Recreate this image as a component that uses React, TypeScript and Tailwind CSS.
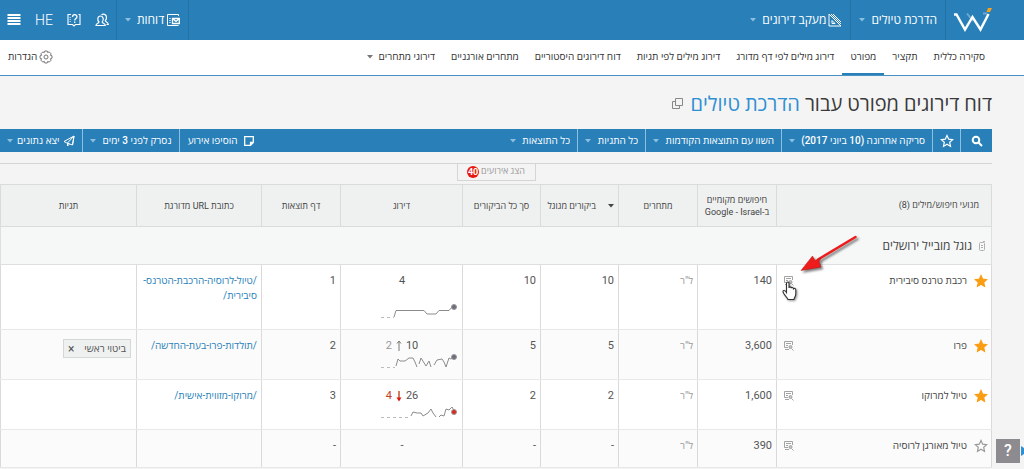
import React from 'react';
import clsx from 'clsx';

interface Spark {
  dashed: string;
  line: string;
  end: number;
  color: string;
}

interface KeywordRow {
  keyword: string;
  starred: boolean;
  searches: string;
  google: string;
  total: string;
  rank: string;
  previous?: string;
  trend?: 'up' | 'down';
  spark?: Spark;
  page: string;
  url?: string[];
  tag?: string;
  height: string;
}

const rows: KeywordRow[] = [
  {
    keyword: 'רכבת טרנס סיבירית',
    starred: true,
    searches: '140',
    google: '10',
    total: '10',
    rank: '4',
    spark: {
      dashed: 'M1 14.500H14',
      line: 'M14 14L16 7.500H44L47 11H56L59 7.500H69L72 4H75',
      end: 4,
      color: '#6b6f7b',
    },
    page: '1',
    url: ['/טיול-לרוסיה-הרכבת-הטרנס-', 'סיבירית/'],
    height: 'h-16',
  },
  {
    keyword: 'פרו',
    starred: true,
    searches: '3,600',
    google: '5',
    total: '5',
    rank: '10',
    previous: '2',
    trend: 'up',
    spark: {
      dashed: 'M1 14.500H15',
      line: 'M16 13L18 6L20 8H25L29 5H33L35 9L37 14M39 11L41 5L46 13L49 8L51 14M54 12L57 7L62 6L64 9L66 14L69 5L71 6L74 4',
      end: 4,
      color: '#6b6f7b',
    },
    page: '2',
    url: ['/תולדות-פרו-בעת-החדשה/'],
    tag: 'ביטוי ראשי',
    height: 'h-[49px]',
  },
  {
    keyword: 'טיול למרוקו',
    starred: true,
    searches: '1,600',
    google: '2',
    total: '2',
    rank: '26',
    previous: '4',
    trend: 'down',
    spark: {
      dashed: 'M1 14.500H31',
      line: 'M31 13L33 9L37 10H41L43 13L48 10L51 6L53 10L56 14M59 14L61 12L64 13L66 6L69 7L72 4L75 9',
      end: 9,
      color: '#d9281c',
    },
    page: '3',
    url: ['/מרוקו-מזווית-אישית/'],
    height: 'h-[49px]',
  },
  {
    keyword: 'טיול מאורגן לרוסיה',
    starred: false,
    searches: '390',
    google: '-',
    total: '-',
    rank: '-',
    page: '-',
    height: 'h-[37px]',
  },
];

const tabs = [
  'סקירה כללית',
  'תקציר',
  'מפורט',
  'דירוג מילים לפי דף מדורג',
  'דירוג מילים לפי תגיות',
  'דוח דירוגים היסטוריים',
  'מתחרים אורגניים',
  'דירוגי מתחרים',
];

const filters = [
  { label: 'תאריך סריקה', value: 'סריקה אחרונה (10 ביוני 2017)' },
  { label: 'השוואה', value: 'השוו עם התוצאות הקודמות' },
  { label: 'תגיות', value: 'כל התגיות' },
  { label: 'תוצאות', value: 'כל התוצאות' },
];

const Caret = ({ className }: { className?: string }) => (
  <svg viewBox="0 0 6 4" className={clsx('h-1 w-1.5 shrink-0', className)} fill="currentColor" aria-hidden="true">
    <path d="M0 0H6L3 3.500Z" />
  </svg>
);

const Logo = () => (
  <svg viewBox="0 0 40 26" className="h-[26px] w-10" fill="none" aria-label="W" role="img">
    <path d="M14 6.500L20 14M30 6.500L34 6.500" stroke="#6ba9d3" strokeWidth="2" />
    <path d="M1 7.500H3.500L12 22.500L19.500 10L27.500 22.500L35.500 7" stroke="#fff" strokeWidth="2.400" />
    <path d="M33.500 5L35 1H39L37 5Z" fill="#f7a11b" />
  </svg>
);

const RulerIcon = () => (
  <svg viewBox="0 0 14 14" className="size-3.5" fill="none" stroke="currentColor" aria-hidden="true">
    <path d="M1 1V13H13ZM4 7.500V10.500H7ZM3 1L13 11M5 1L13 9M8 3L6.500 4.500M10 5L8.500 6.500M12 7L10.500 8.500" />
  </svg>
);

const ReportIcon = () => (
  <svg viewBox="0 0 14 14" className="size-3.5" fill="none" stroke="currentColor" aria-hidden="true">
    <path d="M12.500 3V1.500H1.500V12.500H12.500" />
    <path d="M3 5.500H5M3 7.500H5M3 9.500H5" stroke="#a9cfe9" />
    <path d="M6.500 5.500H13.300V10.500H6.500ZM6.500 5.500L10 8.500L13.300 5.500" strokeWidth="1.300" />
  </svg>
);

const UsersIcon = () => (
  <svg viewBox="0 0 14 14" className="size-3.5" fill="none" stroke="currentColor" strokeWidth="1.200" aria-hidden="true">
    <path d="M1 12.500C1 10 4 10.500 4 9C2 7 2.500 3 5.500 3S9 7 7.200 9C7.200 10.500 10.300 10 10.300 12.500Z" />
    <path d="M6.500 2C8 .5 11.500 1 11.500 4.500C11.500 6 10.800 7 10.300 7.500C10.300 9 13.300 9 13.300 11.500H11.500" />
  </svg>
);

const GuideIcon = () => (
  <svg viewBox="0 0 14 14" className="size-3.5" fill="none" stroke="currentColor" strokeWidth="1.100" aria-hidden="true">
    <path d="M4 1.500H1V11.500H5.500L7 13L8.500 11.500H13V1.500H11.500" />
    <path d="M2.500 4.500H4M2.500 6.500H4M2.500 8.500H4" stroke="#a9cfe9" />
    <path d="M5.500 4C5.500 1 10 1 10 3.700C10 5.500 7.700 5.500 7.700 7.500M7.700 8.500V10" strokeWidth="1.300" />
  </svg>
);

const GearIcon = () => (
  <svg viewBox="0 0 14 14" className="size-3.5" fill="none" stroke="#777" aria-hidden="true">
    <path d="M5.800 1H8.200L8.700 2.600L10.200 1.900L12.100 3.800L11.400 5.300L13 5.800V8.200L11.400 8.700L12.100 10.200L10.200 12.100L8.700 11.400L8.200 13H5.800L5.300 11.400L3.800 12.100L1.900 10.200L2.600 8.700L1 8.200V5.800L2.600 5.300L1.900 3.800L3.800 1.900L5.300 2.600Z" />
    <circle cx="7" cy="7" r="2" />
  </svg>
);

const StarIcon = ({ filled, className }: { filled: boolean; className?: string }) => (
  <svg
    viewBox="0 0 14 14"
    className={clsx('size-3.5 shrink-0', className)}
    fill={filled ? 'currentColor' : 'none'}
    stroke="currentColor"
    strokeWidth="1.200"
    aria-hidden="true"
  >
    <path d="M7 1.500L8.700 5.200L12.700 5.600L9.700 8.300L10.500 12.400L7 10.300L3.500 12.400L4.300 8.300L1.300 5.600L5.300 5.200Z" />
  </svg>
);

const SerpIcon = () => (
  <svg viewBox="0 0 11 11" className="size-[11px]" fill="none" stroke="#a3a3a3" aria-hidden="true">
    <path d="M5 7.500H1.500V1.500H9.500V5M3 3.500H8M3 5.500H5" />
    <circle cx="7.500" cy="7" r="1.500" fill="#c4c4c4" />
    <path d="M8.500 8.500L10.500 10.500M2 9.500H6" />
  </svg>
);

const TrendArrow = ({ trend }: { trend: 'up' | 'down' }) => (
  <svg viewBox="0 0 6 12" className="h-3 w-1.5" fill="none" aria-label={trend} role="img">
    {trend === 'up' ? (
      <path d="M3 11V1.500M1 3.500L3 1L5 3.500" stroke="#777" />
    ) : (
      <>
        <path d="M3 1V9" stroke="#c8502a" strokeWidth="1.500" />
        <path d="M.5 7.500H5.500L3 11.500Z" fill="#e0150c" />
      </>
    )}
  </svg>
);

const Sparkline = ({ spark }: { spark: Spark }) => (
  <svg viewBox="0 0 78 18" className="h-[18px] w-[78px]" fill="none" stroke="#8c8c8c" aria-hidden="true">
    <path d={spark.dashed} stroke="#bbb" strokeDasharray="3 3" />
    <path d={spark.line} />
    <circle cx="74" cy={spark.end} r="2.500" fill={spark.color} stroke="#999" />
  </svg>
);

// red arrow and hand that point at the results button of the first keyword
const Pointer = () => (
  <svg viewBox="0 0 84 70" className="pointer-events-none absolute top-[-32px] left-0 z-10 h-[70px] w-[84px]" aria-hidden="true">
    <g style={{ filter: 'drop-shadow(2px 2px 1px rgba(0,0,0,.5))' }}>
      <path d="M78.500 4L41 26.500" stroke="#ee1c1c" strokeWidth="2.500" strokeLinecap="round" />
      <path d="M24 37.500L35.500 23L38 27.500L44 25L42 29L44 34Z" fill="#ee1c1c" stroke="#b11" strokeWidth=".5" />
    </g>
    <path
      d="M9.500 50.500C9.500 48.500 12 48.500 12 50.500V55C12 53.500 14 53.500 14.200 55.200C14.500 54 16.200 54.200 16.400 55.800C17 55 18.800 55.500 18.800 57V61C18.800 64 17 64.500 17 66.500H11C10.500 64.500 6 61 6 58.500C6 57 8 57 9.500 59.500Z"
      fill="#fff"
      stroke="#333"
      strokeWidth="1.100"
      style={{ filter: 'drop-shadow(1px 1px 1px rgba(0,0,0,.4))' }}
    />
  </svg>
);

const TopBar = () => (
  <header className="flex h-10 items-stretch bg-[#2980b9] text-xs text-white">
    <a href="#home" className="flex w-[79px] items-center border-e border-[#2472a5] ps-[31px]">
      <Logo />
    </a>
    <button type="button" className="flex items-center gap-1.5 border-e border-[#2472a5] px-2">
      הדרכת טיולים
      <Caret className="text-[#8dbfe0]" />
    </button>
    <button type="button" className="flex items-center gap-0.5 px-2">
      <RulerIcon />
      מעקב דירוגים
      <Caret className="ms-1 text-[#8dbfe0]" />
    </button>
    <div className="flex-1" />
    <button type="button" className="flex items-center gap-0.5 border-x border-[#2472a5] px-2">
      <ReportIcon />
      דוחות
      <Caret className="ms-1 text-[#8dbfe0]" />
    </button>
    <div className="flex items-center gap-3.5 ps-[7px] pe-[7px]">
      <button type="button" aria-label="משתמשים">
        <UsersIcon />
      </button>
      <button type="button" aria-label="מדריך">
        <GuideIcon />
      </button>
      <button type="button" className="text-sm font-light">
        HE
      </button>
      <button type="button" aria-label="תפריט">
        <svg viewBox="0 0 14 14" className="size-3.5" stroke="currentColor" strokeWidth="2" aria-hidden="true">
          <path d="M.5 2H13.500M.5 5H13.500M.5 8H13.500M.5 11H13.500" />
        </svg>
      </button>
    </div>
  </header>
);

const Tabs = () => (
  <nav className="flex h-9 items-stretch border-b border-[#4a90c4] bg-white ps-[31px] pe-2 text-[10px] text-[#333]">
    {tabs.map((tab, i) => (
      <a
        key={tab}
        href="#tab"
        className={clsx('flex items-center gap-1.5 border-b-2 px-2 whitespace-nowrap', i === 2 ? 'border-[#2980b9]' : 'border-transparent')}
      >
        {tab}
        {i === tabs.length - 1 && <Caret className="text-[#777]" />}
      </a>
    ))}
    <button type="button" className="ms-auto flex items-center gap-0.5 pb-0.5 whitespace-nowrap">
      <GearIcon />
      הגדרות
    </button>
  </nav>
);

const Toolbar = () => (
  <div className="flex h-[23px] items-stretch bg-[#2980b9] text-[10px] text-white">
    <button type="button" aria-label="חיפוש" className="flex w-8 items-center justify-center border-e border-[#8dbfe0]">
      <svg viewBox="0 0 12 12" className="size-3" fill="none" stroke="currentColor" strokeWidth="2" aria-hidden="true">
        <circle cx="5" cy="5" r="3.300" />
        <path d="M7.500 7.500L11 11" />
      </svg>
    </button>
    <button type="button" aria-label="מועדפים" className="flex w-7 items-center justify-center border-e border-[#8dbfe0]">
      <StarIcon filled={false} />
    </button>
    {filters.map((filter, i) => (
      <label
        key={filter.label}
        className={clsx('flex items-center gap-1.5 px-[7px]', i < filters.length - 1 && 'border-e border-[#8dbfe0]')}
      >
        <select aria-label={filter.label} className="appearance-none bg-transparent font-medium">
          <option>{filter.value}</option>
        </select>
        <Caret className="text-[#8dbfe0]" />
      </label>
    ))}
    <div className="flex-1" />
    <button type="button" className="flex items-center gap-1.5 px-2 font-medium whitespace-nowrap">
      <svg viewBox="0 0 10 10" className="size-2.5" fill="none" stroke="currentColor" strokeWidth="1.300" aria-hidden="true">
        <path d="M.7 .7H9.300V6.500L6.500 9.300H.7ZM9 6.500H6.500V9" />
      </svg>
      הוסיפו אירוע
    </button>
    <button type="button" className="flex items-center gap-1.5 border-x border-[#8dbfe0] px-[7px] font-medium whitespace-nowrap">
      נסרק לפני 3 ימים
      <Caret className="text-[#8dbfe0]" />
    </button>
    <button type="button" className="flex items-center gap-1 px-[7px] font-medium whitespace-nowrap">
      <svg viewBox="0 0 12 12" className="size-3" fill="none" stroke="currentColor" strokeLinejoin="round" aria-hidden="true">
        <path d="M11 1L1 6.500L3.500 7.800L9.500 10ZM11 1L4.500 8V11L6.500 9M11 1L9.500 10" />
      </svg>
      יצא נתונים
      <Caret className="text-[#8dbfe0]" />
    </button>
  </div>
);

const headCell = 'border border-[#dadcdc] px-1 text-center font-normal leading-3 whitespace-nowrap';
const cell = 'border-x border-y border-x-[#dadada] border-y-[#e8e8e8] p-0 align-top';
const numberCell = 'px-1 pt-2.5 leading-3 text-start';

const KeywordLine = ({ row, first, odd }: { row: KeywordRow; first: boolean; odd: boolean }) => (
  <tr className={odd ? 'bg-[#fbfbfb]' : 'bg-white'}>
    <td className={cell}>
      <div className="relative flex items-start gap-[7px] ps-[3px] pe-1.5 pt-2.5 leading-3">
        <button type="button" aria-label="סימון בכוכב" className="-mt-px">
          <StarIcon filled={row.starred} className={row.starred ? 'text-[#fa9d13]' : 'text-[#999]'} />
        </button>
        <span className="flex-1 text-[10px] text-[#444]">{row.keyword}</span>
        <button type="button" aria-label="תוצאות חיפוש">
          <SerpIcon />
        </button>
        {first && <Pointer />}
      </div>
    </td>
    <td className={cell}>
      <div className={numberCell}>{row.searches}</div>
    </td>
    <td className={cell}>
      <div className={clsx(numberCell, 'text-[10px] text-[#999]')}>ל"ר</div>
    </td>
    <td className={cell}>
      <div className={numberCell}>{row.google}</div>
    </td>
    <td className={cell}>
      <div className={numberCell}>{row.total}</div>
    </td>
    <td className={cell}>
      <div className={clsx('flex flex-col justify-between px-1 pt-2.5 leading-3', row.height)}>
        <div className="flex items-center justify-center gap-1 pe-px">
          <span>{row.rank}</span>
          {row.trend && <TrendArrow trend={row.trend} />}
          {row.previous && <span className={row.trend === 'down' ? 'text-[#c43d1e]' : 'text-[#999]'}>{row.previous}</span>}
        </div>
        {row.spark && (
          <div className="pb-2">
            <Sparkline spark={row.spark} />
          </div>
        )}
      </div>
    </td>
    <td className={cell}>
      <div className={numberCell}>{row.page}</div>
    </td>
    <td className={cell}>
      {row.url && (
        <a href="#url" className="block px-1 pt-2 text-[10px] leading-[15px] text-[#2980b9]">
          {row.url.map((part) => (
            <React.Fragment key={part}>
              {part}
              <wbr />
            </React.Fragment>
          ))}
        </a>
      )}
    </td>
    <td className={cell}>
      {row.tag && (
        <div className="flex px-[5px] pt-[9px]">
          <span className="flex h-[19px] items-center gap-2.5 border border-[#d5d8d8] bg-[#eff1f1] px-1 text-[10px]">
            {row.tag}
            <button type="button" aria-label="הסרת תגית" className="text-xs">
              ×
            </button>
          </span>
        </div>
      )}
    </td>
  </tr>
);

const ResultsTable = () => (
  <table className="w-full table-fixed border-collapse text-[11px] text-[#555]">
    <colgroup>
      <col />
      <col className="w-[79px]" />
      <col className="w-[79px]" />
      <col className="w-[78px]" />
      <col className="w-[78px]" />
      <col className="w-[122px]" />
      <col className="w-[79px]" />
      <col className="w-[125px]" />
      <col className="w-[136px]" />
    </colgroup>
    <thead>
      <tr className="h-[42px] bg-[#eff1f1] text-[9px] text-[#444]">
        <th className="border border-[#dadcdc] px-3 text-start font-normal">מנועי חיפוש/מילים (8)</th>
        <th className={headCell}>
          חיפושים מקומיים
          <br />
          ב-<bdi>Google - Israel</bdi>
        </th>
        <th className={headCell}>מתחרים</th>
        <th className={headCell}>
          <span className="flex items-center gap-3">
            <Caret />
            ביקורים מגוגל
          </span>
        </th>
        <th className={headCell}>סך כל הביקורים</th>
        <th className={headCell}>דירוג</th>
        <th className={headCell}>דף תוצאות</th>
        <th className={headCell}>כתובת URL מדורגת</th>
        <th className={headCell}>תגיות</th>
      </tr>
    </thead>
    <tbody>
      <tr className="h-[38px] bg-[#f6f7f7]">
        <td colSpan={9} className="border border-[#dfdfdf] px-[5px] text-xs text-[#444]">
          <span className="flex items-center gap-1.5">
            <svg viewBox="0 0 8 10" className="h-2.5 w-2" fill="none" stroke="#b0b0b0" aria-hidden="true">
              <rect x="1.500" y="1.500" width="5" height="8" rx="1" />
              <path d="M3 4.500H5M3 6.500H5M5 .5H7" />
            </svg>
            גוגל מובייל ירושלים
          </span>
        </td>
      </tr>
      {rows.map((row, i) => (
        <KeywordLine key={row.keyword} row={row} first={i === 0} odd={i % 2 === 1} />
      ))}
    </tbody>
  </table>
);

export default function App() {
  return (
    <div dir="rtl" className="min-h-screen bg-[#f4f4f4] font-['Roboto','Open_Sans',sans-serif] text-[#444]">
      <TopBar />
      <Tabs />
      <main className="ps-8">
        <h1 className="flex h-[53px] items-center gap-2 pt-0.5 text-xl whitespace-nowrap text-[#3a3a3a]">
          <span>
            דוח דירוגים מפורט עבור <span className="text-[#2f8fd3]">הדרכת טיולים</span>
          </span>
          <svg viewBox="0 0 11 11" className="size-[11px]" fill="none" stroke="#888" aria-hidden="true">
            <path d="M3.500 .5H10.500V7.500H3.500ZM3.500 3.500H.5V10.500H7.500V7.500" />
          </svg>
        </h1>
        <Toolbar />
        <div className="mt-[11px] mb-[3px] flex justify-center border-t border-[#d5d5d5]">
          <button type="button" className="flex h-[17px] w-[79px] items-center justify-center gap-0.5 border border-t-0 border-[#d5d5d5] text-[9px] text-[#999]">
            הצג אירועים
            <span className="flex size-3 items-center justify-center rounded-full bg-[#e8190f] leading-3 font-bold text-white">40</span>
          </button>
        </div>
        <ResultsTable />
      </main>
      <div className="fixed right-0 bottom-1.5 flex items-center gap-px">
        <svg viewBox="0 0 3 10" className="h-2.5 w-[3px]" fill="#2f8fd3" aria-hidden="true">
          <path d="M0 0L3 2V8L0 10Z" />
        </svg>
        <button type="button" className="size-6 bg-[#8d8b90] text-base font-medium text-white">
          ?
        </button>
      </div>
    </div>
  );
}
